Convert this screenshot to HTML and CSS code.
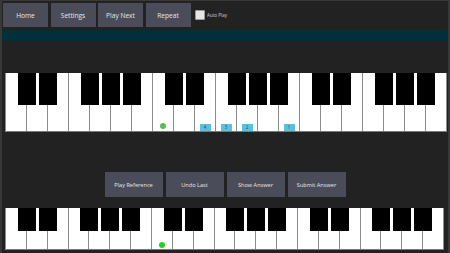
FILE: index.html
```html
<!DOCTYPE html>
<html lang="en">
<head>
    <meta charset="UTF-8">
    <title>Ear Trainer</title>
    <link rel="stylesheet" href="styles.css">
</head>
<body>
    <div class="app">
        <div class="topbar">
            <button class="btn top-btn">Home</button>
            <button class="btn top-btn">Settings</button>
            <button class="btn top-btn">Play Next</button>
            <button class="btn top-btn">Repeat</button>
            <label class="auto-play"><span class="check"></span>Auto Play</label>
        </div>

        <div class="strip"></div>

        <div class="piano piano-top">
            <div class="white"></div>
            <div class="white"></div>
            <div class="white"></div>
            <div class="white"></div>
            <div class="white"></div>
            <div class="white"></div>
            <div class="white"></div>
            <div class="white"><span class="dot"></span></div>
            <div class="white"></div>
            <div class="white"><span class="tag">4</span></div>
            <div class="white"><span class="tag">3</span></div>
            <div class="white"><span class="tag">2</span></div>
            <div class="white"></div>
            <div class="white"><span class="tag">1</span></div>
            <div class="white"></div>
            <div class="white"></div>
            <div class="white"></div>
            <div class="white"></div>
            <div class="white"></div>
            <div class="white"></div>
            <div class="white"></div>

            <div class="black" style="--i:1"></div>
            <div class="black" style="--i:2"></div>
            <div class="black" style="--i:4"></div>
            <div class="black" style="--i:5"></div>
            <div class="black" style="--i:6"></div>
            <div class="black" style="--i:8"></div>
            <div class="black" style="--i:9"></div>
            <div class="black" style="--i:11"></div>
            <div class="black" style="--i:12"></div>
            <div class="black" style="--i:13"></div>
            <div class="black" style="--i:15"></div>
            <div class="black" style="--i:16"></div>
            <div class="black" style="--i:18"></div>
            <div class="black" style="--i:19"></div>
            <div class="black" style="--i:20"></div>
        </div>

        <div class="controls">
            <button class="btn ctl-btn">Play Reference</button>
            <button class="btn ctl-btn">Undo Last</button>
            <button class="btn ctl-btn">Show Answer</button>
            <button class="btn ctl-btn">Submit Answer</button>
        </div>

        <div class="piano piano-bottom">
            <div class="white"></div>
            <div class="white"></div>
            <div class="white"></div>
            <div class="white"></div>
            <div class="white"></div>
            <div class="white"></div>
            <div class="white"></div>
            <div class="white"><span class="dot dot-live"></span></div>
            <div class="white"></div>
            <div class="white"></div>
            <div class="white"></div>
            <div class="white"></div>
            <div class="white"></div>
            <div class="white"></div>
            <div class="white"></div>
            <div class="white"></div>
            <div class="white"></div>
            <div class="white"></div>
            <div class="white"></div>
            <div class="white"></div>
            <div class="white"></div>

            <div class="black" style="--i:1"></div>
            <div class="black" style="--i:2"></div>
            <div class="black" style="--i:4"></div>
            <div class="black" style="--i:5"></div>
            <div class="black" style="--i:6"></div>
            <div class="black" style="--i:8"></div>
            <div class="black" style="--i:9"></div>
            <div class="black" style="--i:11"></div>
            <div class="black" style="--i:12"></div>
            <div class="black" style="--i:13"></div>
            <div class="black" style="--i:15"></div>
            <div class="black" style="--i:16"></div>
            <div class="black" style="--i:18"></div>
            <div class="black" style="--i:19"></div>
            <div class="black" style="--i:20"></div>
        </div>
    </div>
</body>
</html>
```

FILE: styles.css
```css
* {
    margin: 0;
    padding: 0;
    box-sizing: border-box;
}

html, body {
    width: 450px;
    height: 253px;
    overflow: hidden;
}

body {
    background: #383838;
    font-family: 'Open Sans', 'Noto Sans', sans-serif;
    color: #e6e6e6;
}

.app {
    margin: 1px 2px 0 2px;
    height: 252px;
    background: #222222;
    display: flex;
    flex-direction: column;
}

.topbar {
    display: flex;
    align-items: center;
    gap: 2.5px;
    padding: 2px 1px 0 1px;
    height: 26px;
}

.btn {
    background: #4a4d59;
    border: none;
    color: #e6e6e6;
    font-family: inherit;
    cursor: pointer;
}

.top-btn {
    width: 45px;
    height: 24px;
    font-size: 6.6px;
}

.auto-play {
    display: flex;
    align-items: center;
    gap: 2px;
    margin-left: 2px;
    font-size: 4.6px;
    color: #cccccc;
}

.check {
    width: 10px;
    height: 10px;
    background: #e6e6e6;
    border: 1px solid #9a9a9a;
    border-radius: 1px;
}

.strip {
    margin-top: 3px;
    height: 11px;
    background: #01303b;
}

.piano {
    position: relative;
    display: flex;
    margin-left: 3px;
    border-left: 1px solid #8c8c8c;
    border-bottom: 1px solid #7a7a7a;
}

.piano-top {
    margin-top: 32px;
    width: 442px;
    height: 59px;
    --black-h: 32px;
}

.piano-bottom {
    margin-top: 11px;
    width: 439px;
    height: 42px;
    --black-h: 23px;
}

.white {
    flex: 1;
    background: #ffffff;
    border-right: 1px solid #8c8c8c;
    display: flex;
    flex-direction: column;
    justify-content: flex-end;
    align-items: center;
    padding-bottom: 1px;
}

.black {
    position: absolute;
    top: 0;
    left: calc(var(--i) * 100% / 21 - 9px);
    width: 18px;
    height: var(--black-h);
    background: #000000;
}

.dot {
    width: 6px;
    height: 6px;
    border-radius: 50%;
    background: #5cb85c;
    margin-bottom: 1px;
}

.dot-live {
    background: #1ed31e;
    margin-bottom: 0;
}

.tag {
    width: 11px;
    height: 7px;
    background: #5bc0de;
    color: #1d4f60;
    font-size: 4.5px;
    line-height: 7px;
    text-align: center;
    margin-bottom: -1px;
}

.controls {
    display: flex;
    justify-content: center;
    gap: 3px;
    margin-top: 40px;
}

.ctl-btn {
    width: 58px;
    height: 25px;
    font-size: 5.6px;
}
```
